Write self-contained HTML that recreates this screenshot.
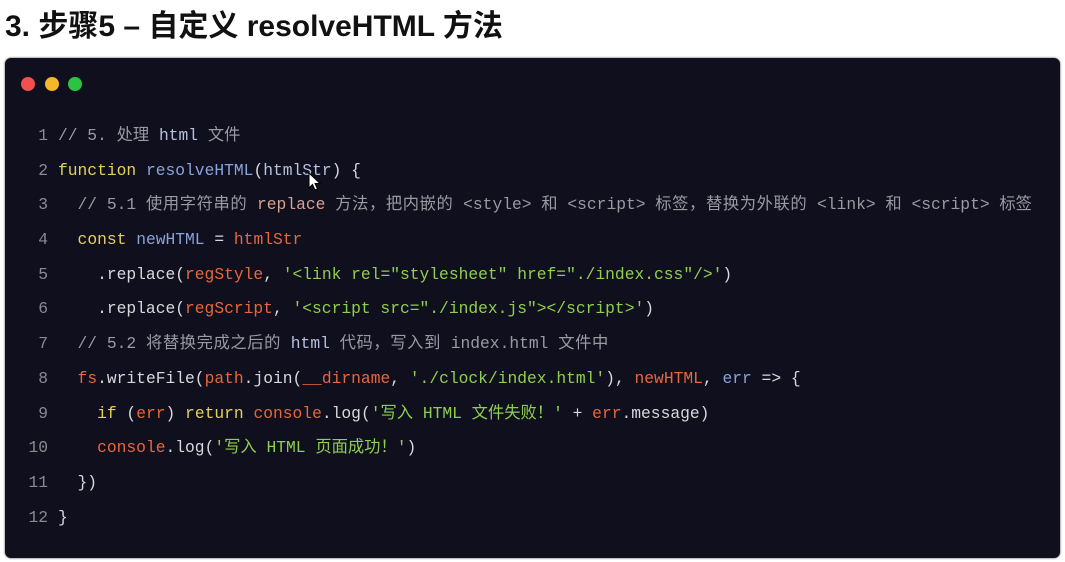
<!DOCTYPE html>
<html><head><meta charset="utf-8"><style>
html,body{margin:0;padding:0;background:#fff;width:1065px;height:562px;overflow:hidden;position:relative}
.title{position:absolute;left:5px;top:1px;font:bold 30px "Liberation Sans","Noto Sans CJK SC",sans-serif;color:#111;white-space:nowrap;letter-spacing:0px}
.panel{position:absolute;left:5px;top:58px;width:1055px;height:500px;background:#0f0f1d;border-radius:6px;box-shadow:0 0 2px #444}
.dot{position:absolute;top:77px;width:14px;height:14px;border-radius:50%}
.code{position:absolute;left:0;top:119px;width:1060px;font:16.3px "Liberation Mono","Noto Sans CJK SC",monospace;color:#d8d8dc}
.l{height:34.7px;line-height:34.7px;position:relative;white-space:nowrap}
.ln{position:absolute;left:0;width:48px;text-align:right;color:#8a8a92}
.t{position:absolute;left:58px;white-space:pre}
.c{color:#9a9aa2}.k{color:#e3d25a}.f{color:#8aa2dc}.o{color:#e8663c}.s{color:#8fcf4f}.p{color:#b7c0dc}
.cj{letter-spacing:0.6px}
</style></head><body>
<div class="title">3. 步骤5 – 自定义 resolveHTML 方法</div>
<div class="panel"></div>
<div class="dot" style="left:21px;background:#f0504e"></div>
<div class="dot" style="left:45px;background:#f3b72a"></div>
<div class="dot" style="left:68px;background:#2ec244"></div>
<div class="code"><div class="l"><span class="ln">1</span><span class="t c">// 5. 处理 <span class="p">html</span> 文件</span></div><div class="l"><span class="ln">2</span><span class="t"><span class="k">function</span> <span class="f">resolveHTML</span>(<span class="p">htmlStr</span>) {</span></div><div class="l"><span class="ln">3</span><span class="t c">  // 5.1 <span class="cj">使用字符串的</span> <span style="color:#d8a090">replace</span> <span class="cj">方法，把内嵌的</span> &lt;style&gt; 和 &lt;script&gt; <span class="cj">标签，替换为外联的</span> &lt;link&gt; 和 &lt;script&gt; 标签</span></div><div class="l"><span class="ln">4</span><span class="t">  <span class="k">const</span> <span class="f">newHTML</span> = <span class="o">htmlStr</span></span></div><div class="l"><span class="ln">5</span><span class="t">    .replace(<span class="o">regStyle</span>, <span class="s">'&lt;link rel="stylesheet" href="./index.css"/&gt;'</span>)</span></div><div class="l"><span class="ln">6</span><span class="t">    .replace(<span class="o">regScript</span>, <span class="s">'&lt;script src="./index.js"&gt;&lt;/script&gt;'</span>)</span></div><div class="l"><span class="ln">7</span><span class="t c">  // 5.2 <span class="cj">将替换完成之后的</span> <span class="p">html</span> <span class="cj">代码，写入到</span> index.html <span class="cj">文件中</span></span></div><div class="l"><span class="ln">8</span><span class="t">  <span class="o">fs</span>.writeFile(<span class="o">path</span>.join(<span class="o">__dirname</span>, <span class="s">'./clock/index.html'</span>), <span class="o">newHTML</span>, <span class="f">err</span> =&gt; {</span></div><div class="l"><span class="ln">9</span><span class="t">    <span class="k">if</span> (<span class="o">err</span>) <span class="k">return</span> <span class="o">console</span>.log(<span class="s">'写入 HTML 文件失败！'</span> + <span class="o">err</span>.message)</span></div><div class="l"><span class="ln">10</span><span class="t">    <span class="o">console</span>.log(<span class="s">'写入 HTML 页面成功！'</span>)</span></div><div class="l"><span class="ln">11</span><span class="t">  })</span></div><div class="l"><span class="ln">12</span><span class="t">}</span></div></div>
<svg style="position:absolute;left:308px;top:172px" width="14" height="20" viewBox="0 0 14 20"><path d="M1 1 L1 16 L4.5 12.5 L7 18 L9.5 17 L7 11.5 L12 11.5 Z" fill="#fff" stroke="#000" stroke-width="1"/></svg>
</body></html>
